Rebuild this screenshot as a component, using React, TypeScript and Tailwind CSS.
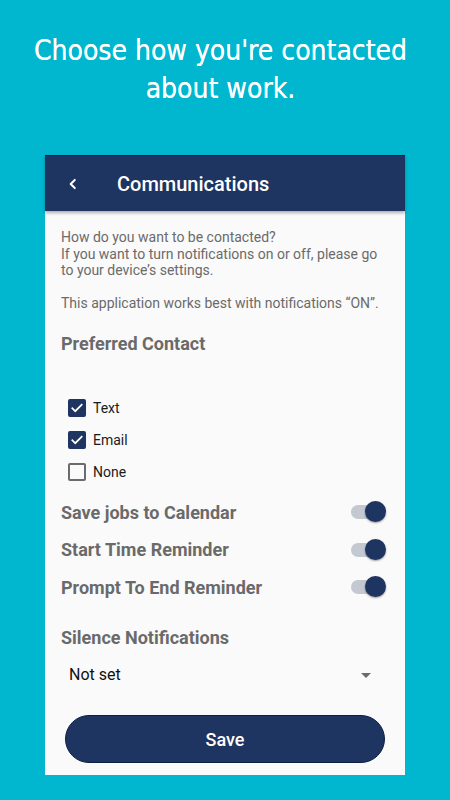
import React from "react";

function Check({ checked }: { checked: boolean }) {
  return checked ? (
    <div className="w-[18px] h-[18px] rounded-[2px] bg-[#1e3461] flex items-center justify-center">
      <svg width="14" height="14" viewBox="0 0 24 24" fill="none" stroke="white" strokeWidth="3" strokeLinecap="square">
        <path d="M4 12.5l5 5L20 6.5" />
      </svg>
    </div>
  ) : (
    <div className="w-[18px] h-[18px] rounded-[2px] border-2 border-[#6b6b6b]" />
  );
}

function Toggle() {
  return (
    <div className="relative w-[36px] h-[22px] flex items-center">
      <div className="w-[32px] h-[14px] rounded-full bg-[#c3c8d1] ml-[1px]" />
      <div className="absolute right-0 top-0 w-[21px] h-[21px] rounded-full bg-[#1e3461] shadow-[0_1px_2px_rgba(0,0,0,0.4)]" />
    </div>
  );
}

export default function App() {
  const roboto = { fontFamily: "Roboto, 'Noto Sans', sans-serif" };
  return (
    <div className="w-[450px] h-[800px] bg-[#00b7cf] flex flex-col items-center overflow-hidden">
      <h1
        className="text-white text-[28px] leading-[38px] text-center mt-[32px] pr-[9px] font-stretch-condensed [text-shadow:0_0_0.4px_white]"
        style={{ fontFamily: "'DejaVu Sans Condensed', 'DejaVu Sans', Verdana, sans-serif" }}
      >
        Choose how you're contacted
        <br />
        about work.
      </h1>
      <div className="mt-[47px] w-[360px] h-[620px] bg-[#fafafa] flex flex-col" style={roboto}>
        <div className="h-[56px] bg-[#1e3461] flex items-center shadow-[0_2px_3px_rgba(0,0,0,0.3)] border-t border-[#0d1f47]">
          <svg width="14" height="14" viewBox="0 0 24 24" className="ml-[21px]" fill="none" stroke="white" strokeWidth="3.5" strokeLinecap="round" strokeLinejoin="round">
            <path d="M15 5l-7 7 7 7" />
          </svg>
          <span className="ml-[37px] text-white text-[20px] font-medium">Communications</span>
        </div>
        <div className="px-[16px] pt-[18px] text-[14px] leading-[16.5px] text-[#6a6a6a]">
          <p>How do you want to be contacted?</p>
          <p>If you want to turn notifications on or off, please go to your device’s settings.</p>
          <p className="mt-[16px]">This application works best with notifications “ON”.</p>
        </div>
        <div className="px-[16px] mt-[19px] text-[18px] font-bold text-[#6a6a6a]">Preferred Contact</div>
        <div className="px-[23px] mt-[42px] flex flex-col gap-[14px]">
          {[
            ["Text", true],
            ["Email", true],
            ["None", false],
          ].map(([l, c]) => (
            <div key={l as string} className="flex items-center h-[18px] gap-[7px]">
              <Check checked={c as boolean} />
              <span className="text-[14px] text-[#1a1a1a]">{l as string}</span>
            </div>
          ))}
        </div>
        <div className="mt-[20px] flex flex-col gap-[15.5px] pl-[16px] pr-[19px]">
          {["Save jobs to Calendar", "Start Time Reminder", "Prompt To End Reminder"].map((t) => (
            <div key={t} className="flex items-center justify-between h-[22px]">
              <span className="text-[18px] font-bold text-[#6a6a6a]">{t}</span>
              <Toggle />
            </div>
          ))}
        </div>
        <div className="px-[16px] mt-[26px] text-[18px] font-bold text-[#6a6a6a]">Silence Notifications</div>
        <div className="mt-[13px] pl-[24px] pr-[34px] flex items-center justify-between h-[22px]">
          <span className="text-[16px] text-[#111]">Not set</span>
          <svg width="10" height="5" viewBox="0 0 10 5">
            <path d="M0 0h10L5 5z" fill="#6b6b6b" />
          </svg>
        </div>
        <button className="mt-[29px] mx-[20px] h-[48px] rounded-full bg-[#1e3461] text-white text-[18px] font-medium border border-[#0d1f47]">
          Save
        </button>
      </div>
    </div>
  );
}
